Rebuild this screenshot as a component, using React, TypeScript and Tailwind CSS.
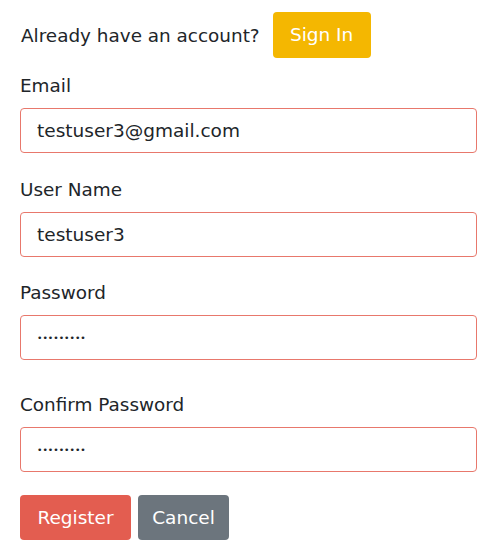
export default function App() {
  const label = "block h-[27px] text-[18.4px] leading-[27px] mb-[9px]";
  const input =
    "block w-full h-[45px] rounded-[4px] border border-[#e8786c] bg-white px-[16px] text-[#212529] outline-none font-['DejaVu_Sans',sans-serif]";
  return (
    <div className="min-h-[553px] w-[485px] bg-white pl-[20px] pr-[8px] pt-[12px] font-['DejaVu_Sans',sans-serif] text-[#212529]">
      <div className="flex items-center gap-[13px]">
        <span className="pl-px text-[18.4px] leading-[27px]">Already have an account?</span>
        <button className="h-[46px] w-[98px] rounded-[4px] bg-[#f4b701] text-[18.5px] text-white">Sign In</button>
      </div>
      <label className={"mt-[14px] " + label}>Email</label>
      <input className={input + " text-[18.5px]"} readOnly defaultValue="testuser3@gmail.com" />
      <label className={"mt-[23px] " + label}>User Name</label>
      <input className={input + " text-[18.5px]"} readOnly defaultValue="testuser3" />
      <label className={"mt-[22px] " + label}>Password</label>
      <input className={input + " text-[9.2px]"} type="password" readOnly defaultValue="testuser3" />
      <label className={"mt-[31px] " + label}>Confirm Password</label>
      <input className={input + " text-[9.2px]"} type="password" readOnly defaultValue="testuser3" />
      <div className="mt-[23px] flex gap-[7px]">
        <button className="h-[45px] w-[111px] rounded-[4px] bg-[#e35d50] text-[18.5px] text-white">Register</button>
        <button className="h-[45px] w-[91px] rounded-[4px] bg-[#6c757d] text-[18.5px] text-white">Cancel</button>
      </div>
    </div>
  );
}
